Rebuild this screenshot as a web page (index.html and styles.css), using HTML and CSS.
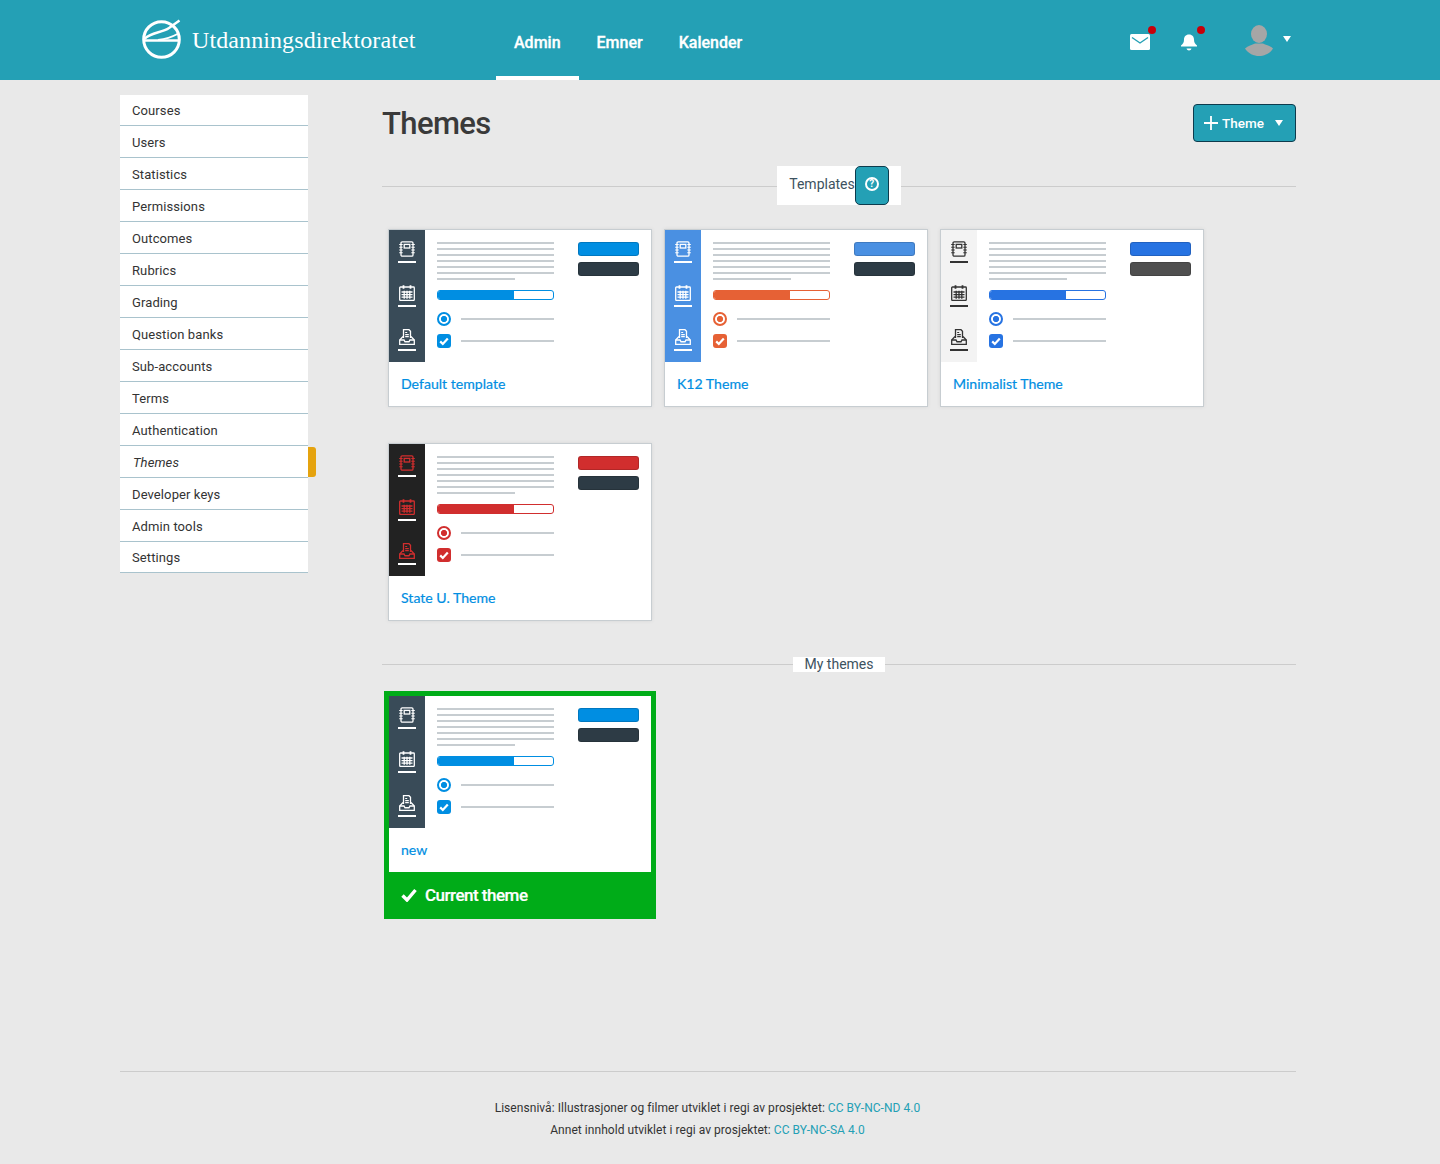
FILE: index.html
```html
<!DOCTYPE html>
<html lang="en">

<head>
    <meta charset="UTF-8" />
    <meta name="viewport" content="width=device-width, initial-scale=1.0" />
    <title>Themes</title>
    <link rel="stylesheet" href="styles.css">
</head>

<body>

    <svg class="icon-defs" aria-hidden="true">
        <symbol id="ico-notebook" viewBox="0 0 16 16">
            <g fill="none" stroke="currentColor" stroke-width="1.3">
                <rect x="2" y="0.8" width="12" height="14.4" rx="1.2" />
                <rect x="5.2" y="3.4" width="5.6" height="3.6" />
                <path d="M0.2 3.5h3.5M0.2 6.2h3.5M0.2 9h3.5M0.2 11.8h3.5M12.3 3.5h3.5M12.3 6.2h3.5M12.3 9h3.5M12.3 11.8h3.5" stroke-width="1.1" />
            </g>
        </symbol>
        <symbol id="ico-calendar" viewBox="0 0 16 16">
            <g fill="none" stroke="currentColor" stroke-width="1.3">
                <rect x="0.7" y="2" width="14.6" height="13.4" rx="0.8" />
                <path d="M4.5 0.2v3.6M11.5 0.2v3.6" stroke-width="1.8" />
                <path d="M2.5 7h11M2.5 9.6h11M2.5 12.2h11M5.2 5.8v8M8 5.8v8M10.8 5.8v8" />
            </g>
        </symbol>
        <symbol id="ico-tray" viewBox="0 0 16 16">
            <g fill="none" stroke="currentColor" stroke-width="1.3">
                <path d="M4.5 9V0.7h5.5l1.500 1.500V9" />
                <path d="M6.2 3.5h2M6.2 5.600h3.600M6.2 7.600h3.600" stroke-width="1.1" />
                <path d="M4 7.5L0.7 11v4.300h14.600V11L12 7.5" />
                <path d="M0.7 11h4.300l1 1.800h4l1-1.800h4.300" stroke-width="1.4" />
            </g>
        </symbol>
        <symbol id="ico-check" viewBox="0 0 14 14">
            <path d="M3.2 7.4l2.600 2.600 5-5.600" fill="none" stroke="currentColor" stroke-width="2.2" />
        </symbol>
    </svg>

    <header class="topbar">
        <a class="brand" href="#">
            <svg class="brand-logo" viewBox="0 0 42 42">
                <g fill="none" stroke="#fff">
                    <circle cx="20.5" cy="20.5" r="17.8" stroke-width="3" />
                    <path d="M3 21.5H38" stroke-width="2.4" />
                    <path d="M3.5 20C10 13 21 14 28 9L38.5 1.5" stroke-width="2.4" />
                    <path d="M17 21C25 20 31 18 36.5 15" stroke-width="1.8" />
                </g>
            </svg>
            <span class="brand-name">Utdanningsdirektoratet</span>
        </a>
        <nav class="mainnav">
            <a class="mainnav-link active" href="#">Admin</a>
            <a class="mainnav-link" href="#">Emner</a>
            <a class="mainnav-link" href="#">Kalender</a>
        </nav>
        <div class="usertools">
            <span class="tool tool-mail">
                <svg width="20" height="16" viewBox="0 0 20 16">
                    <rect width="20" height="16" rx="1.5" fill="#fff" />
                    <path d="M2 3.5l8 5.5 8-5.5" fill="none" stroke="#24a0b5" stroke-width="1.4" />
                </svg>
                <i class="dot"></i>
            </span>
            <span class="tool tool-bell">
                <svg width="18" height="17" viewBox="0 0 18 17">
                    <path d="M9 0.5c3.4 0 5 2.6 5 5.5 0 3 1 5 3 6.5v1H1v-1c2-1.5 3-3.5 3-6.5C4 3.1 5.6 0.5 9 0.5z" fill="#fff" transform="scale(1 0.92)" />
                    <path d="M6.5 14.5h5c-0.3 1.3-1.3 2-2.5 2s-2.2-0.7-2.500-2z" fill="#fff" />
                </svg>
                <i class="dot"></i>
            </span>
            <svg class="avatar" width="28" height="31" viewBox="0 0 28 31">
                <ellipse cx="14" cy="9" rx="8" ry="9" fill="#a6a6a6" />
                <path d="M0 23.5C3 20.5 7 20 10 18.5h8c3 1.5 7 2 10 5C25 28.5 19 31 14 31S3 28.5 0 23.5z" fill="#a6a6a6" />
            </svg>
            <i class="caret caret-user"></i>
        </div>
    </header>

    <div class="layout">
        <aside class="sidenav">
            <a class="sidenav-item first" href="#">Courses</a>
            <a class="sidenav-item" href="#">Users</a>
            <a class="sidenav-item" href="#">Statistics</a>
            <a class="sidenav-item" href="#">Permissions</a>
            <a class="sidenav-item" href="#">Outcomes</a>
            <a class="sidenav-item" href="#">Rubrics</a>
            <a class="sidenav-item" href="#">Grading</a>
            <a class="sidenav-item" href="#">Question banks</a>
            <a class="sidenav-item" href="#">Sub-accounts</a>
            <a class="sidenav-item" href="#">Terms</a>
            <a class="sidenav-item" href="#">Authentication</a>
            <a class="sidenav-item active" href="#">Themes</a>
            <a class="sidenav-item" href="#">Developer keys</a>
            <a class="sidenav-item" href="#">Admin tools</a>
            <a class="sidenav-item last" href="#">Settings</a>
        </aside>

        <main class="content">
            <div class="content-head">
                <h1>Themes</h1>
                <button class="add-btn">
                    <svg width="14" height="14" viewBox="0 0 14 14">
                        <path d="M7 0v14M0 7h14" stroke="#fff" stroke-width="1.8" />
                    </svg>
                    <span>Theme</span>
                    <i class="caret"></i>
                </button>
            </div>

            <div class="divider divider-templates">
                <div class="divider-label">
                    <span>Templates</span>
                    <button class="help-btn"><span class="help-mark">?</span></button>
                </div>
            </div>

            <section class="card-grid">
                <article class="card theme-default">
                    <div class="preview">
                        <div class="mini-nav">
                            <div class="mini-nav-item"><svg><use href="#ico-notebook" /></svg></div>
                            <div class="mini-nav-item"><svg><use href="#ico-calendar" /></svg></div>
                            <div class="mini-nav-item"><svg><use href="#ico-tray" /></svg></div>
                        </div>
                        <div class="mini-main">
                            <div class="mini-text"><i></i><i></i><i></i><i></i><i></i><i></i><i></i></div>
                            <div class="mini-bar"><b></b></div>
                            <div class="mini-row"><span class="mini-radio"></span><i></i></div>
                            <div class="mini-row"><span class="mini-check"><svg><use href="#ico-check" /></svg></span><i></i></div>
                        </div>
                        <div class="mini-btns"><span class="mini-btn-a"></span><span class="mini-btn-b"></span></div>
                    </div>
                    <a class="card-name" href="#">Default template</a>
                </article>

                <article class="card theme-k12">
                    <div class="preview">
                        <div class="mini-nav">
                            <div class="mini-nav-item"><svg><use href="#ico-notebook" /></svg></div>
                            <div class="mini-nav-item"><svg><use href="#ico-calendar" /></svg></div>
                            <div class="mini-nav-item"><svg><use href="#ico-tray" /></svg></div>
                        </div>
                        <div class="mini-main">
                            <div class="mini-text"><i></i><i></i><i></i><i></i><i></i><i></i><i></i></div>
                            <div class="mini-bar"><b></b></div>
                            <div class="mini-row"><span class="mini-radio"></span><i></i></div>
                            <div class="mini-row"><span class="mini-check"><svg><use href="#ico-check" /></svg></span><i></i></div>
                        </div>
                        <div class="mini-btns"><span class="mini-btn-a"></span><span class="mini-btn-b"></span></div>
                    </div>
                    <a class="card-name" href="#">K12 Theme</a>
                </article>

                <article class="card theme-minimal">
                    <div class="preview">
                        <div class="mini-nav">
                            <div class="mini-nav-item"><svg><use href="#ico-notebook" /></svg></div>
                            <div class="mini-nav-item"><svg><use href="#ico-calendar" /></svg></div>
                            <div class="mini-nav-item"><svg><use href="#ico-tray" /></svg></div>
                        </div>
                        <div class="mini-main">
                            <div class="mini-text"><i></i><i></i><i></i><i></i><i></i><i></i><i></i></div>
                            <div class="mini-bar"><b></b></div>
                            <div class="mini-row"><span class="mini-radio"></span><i></i></div>
                            <div class="mini-row"><span class="mini-check"><svg><use href="#ico-check" /></svg></span><i></i></div>
                        </div>
                        <div class="mini-btns"><span class="mini-btn-a"></span><span class="mini-btn-b"></span></div>
                    </div>
                    <a class="card-name" href="#">Minimalist Theme</a>
                </article>

                <article class="card theme-state">
                    <div class="preview">
                        <div class="mini-nav">
                            <div class="mini-nav-item"><svg><use href="#ico-notebook" /></svg></div>
                            <div class="mini-nav-item"><svg><use href="#ico-calendar" /></svg></div>
                            <div class="mini-nav-item"><svg><use href="#ico-tray" /></svg></div>
                        </div>
                        <div class="mini-main">
                            <div class="mini-text"><i></i><i></i><i></i><i></i><i></i><i></i><i></i></div>
                            <div class="mini-bar"><b></b></div>
                            <div class="mini-row"><span class="mini-radio"></span><i></i></div>
                            <div class="mini-row"><span class="mini-check"><svg><use href="#ico-check" /></svg></span><i></i></div>
                        </div>
                        <div class="mini-btns"><span class="mini-btn-a"></span><span class="mini-btn-b"></span></div>
                    </div>
                    <a class="card-name" href="#">State U. Theme</a>
                </article>
            </section>

            <div class="divider divider-mine">
                <div class="divider-label">
                    <span>My themes</span>
                </div>
            </div>

            <section class="card-grid card-grid-mine">
                <article class="card card-current theme-default">
                    <div class="preview">
                        <div class="mini-nav">
                            <div class="mini-nav-item"><svg><use href="#ico-notebook" /></svg></div>
                            <div class="mini-nav-item"><svg><use href="#ico-calendar" /></svg></div>
                            <div class="mini-nav-item"><svg><use href="#ico-tray" /></svg></div>
                        </div>
                        <div class="mini-main">
                            <div class="mini-text"><i></i><i></i><i></i><i></i><i></i><i></i><i></i></div>
                            <div class="mini-bar"><b></b></div>
                            <div class="mini-row"><span class="mini-radio"></span><i></i></div>
                            <div class="mini-row"><span class="mini-check"><svg><use href="#ico-check" /></svg></span><i></i></div>
                        </div>
                        <div class="mini-btns"><span class="mini-btn-a"></span><span class="mini-btn-b"></span></div>
                    </div>
                    <a class="card-name" href="#">new</a>
                    <div class="current-label">
                        <svg width="16" height="14" viewBox="0 0 16 14">
                            <path d="M1.5 7.5l4.5 4.5L14.5 2" fill="none" stroke="#fff" stroke-width="3.4" />
                        </svg>
                        <span>Current theme</span>
                    </div>
                </article>
            </section>
        </main>
    </div>

    <footer class="pagefoot">
        <p>Lisensnivå: Illustrasjoner og filmer utviklet i regi av prosjektet: <a href="#">CC BY-NC-ND 4.0</a></p>
        <p>Annet innhold utviklet i regi av prosjektet: <a href="#">CC BY-NC-SA 4.0</a></p>
    </footer>

</body>

</html>
```

FILE: styles.css
```css
* {
    box-sizing: border-box;
    margin: 0;
    padding: 0;
}

body {
    background: #e9e9e9;
    color: #333;
    font-family: Roboto, sans-serif;
}

a {
    text-decoration: none;
}

.icon-defs {
    display: none;
}

/* top bar */
.topbar {
    display: flex;
    align-items: stretch;
    height: 80px;
    padding-left: 141px;
    background: #24a0b5;
}

.brand {
    display: flex;
    align-items: center;
    width: 355px;
    color: #fff;
}

.brand-logo {
    width: 42px;
    height: 42px;
}

.brand-name {
    margin-left: 9px;
    font-family: "Liberation Serif", serif;
    font-size: 24px;
    letter-spacing: 0.1px;
}

.mainnav {
    display: flex;
}

.mainnav-link {
    display: flex;
    align-items: center;
    padding: 8px 18px 0;
    border-bottom: 4px solid transparent;
    color: #fff;
    font-size: 16px;
    font-weight: 500;
    -webkit-text-stroke: 0.3px #fff;
}

.mainnav-link.active {
    border-bottom-color: #fff;
}

.usertools {
    display: flex;
    align-items: flex-start;
    margin-left: 370px;
    padding-top: 34px;
}

.tool {
    position: relative;
    display: block;
    line-height: 0;
}

.tool-bell {
    margin-left: 30px;
}

.dot {
    position: absolute;
    top: -8px;
    right: -6px;
    width: 8px;
    height: 8px;
    border-radius: 50%;
    background: #c8000a;
}

.tool-bell .dot {
    right: -7px;
}

.avatar {
    margin: -9px 0 0 47px;
}

.caret {
    width: 0;
    height: 0;
    border-left: 4px solid transparent;
    border-right: 4px solid transparent;
    border-top: 6px solid #fff;
}

.caret-user {
    margin: 2px 0 0 10px;
}

/* page layout */
.layout {
    display: flex;
    align-items: flex-start;
    padding-left: 120px;
}

.sidenav {
    display: flex;
    flex-direction: column;
    width: 188px;
    margin-top: 15px;
    background: #fff;
}

.sidenav-item {
    position: relative;
    display: flex;
    align-items: center;
    height: 32px;
    padding: 2px 0 0 12px;
    border-bottom: 1px solid #a9c3cd;
    color: #333;
    font-size: 13px;
    letter-spacing: 0.1px;
}

.sidenav-item.first,
.sidenav-item.last {
    height: 31px;
    padding-top: 0;
}

.sidenav-item.active {
    font-style: italic;
    padding-left: 13px;
}

.sidenav-item.active::after {
    content: "";
    position: absolute;
    top: 1px;
    left: 188px;
    width: 8px;
    height: 30px;
    border-radius: 0 3px 3px 0;
    background: #e5a30f;
}

.content {
    width: 914px;
    margin-left: 74px;
}

.content-head {
    display: flex;
    justify-content: space-between;
    align-items: flex-start;
    height: 86px;
    padding-top: 24px;
}

.content-head h1 {
    font-size: 31px;
    font-weight: 500;
    line-height: 40px;
    letter-spacing: -0.6px;
    color: #3a3a3a;
}

.add-btn {
    display: flex;
    align-items: center;
    width: 103px;
    height: 38px;
    padding-left: 10px;
    border: 1px solid #0d3b4d;
    border-radius: 4px;
    background: #24a0b5;
    color: #fff;
    font-family: Roboto, sans-serif;
    font-size: 13.5px;
    font-weight: 500;
}

.add-btn span {
    margin-left: 4px;
}

.add-btn .caret {
    margin-left: 11px;
}

/* section dividers */
.divider {
    display: flex;
    justify-content: center;
    background: linear-gradient(#ccc, #ccc) 0 0 / 100% 1px no-repeat;
}

.divider-label {
    display: flex;
    align-items: center;
    background: #fff;
    color: #3d5260;
    font-size: 14px;
    padding: 0 12px;
}

.divider-templates {
    background-position: 0 20px;
}

.divider-templates .divider-label {
    height: 39px;
    padding-bottom: 3px;
}

.divider-mine {
    margin-top: 36px;
    background-position: 0 7px;
}

.divider-mine .divider-label {
    height: 15px;
    padding-bottom: 2px;
}

.help-btn {
    display: flex;
    justify-content: center;
    align-items: flex-start;
    width: 34px;
    height: 39px;
    margin-bottom: -3px;
    padding-top: 10px;
    border: 1px solid #0d3b4d;
    border-radius: 5px;
    background: #24a0b5;
}

.help-mark {
    display: block;
    width: 14px;
    height: 14px;
    border: 2px solid #fff;
    border-radius: 50%;
    color: #fff;
    font-family: Roboto, sans-serif;
    font-size: 10px;
    font-weight: 700;
    line-height: 10px;
    text-align: center;
}

/* theme cards */
.card-grid {
    display: flex;
    flex-wrap: wrap;
    gap: 36px 12px;
    margin: 24px 0 0 6px;
}

.card-grid-mine {
    margin: 19px 0 0 2px;
}

.card {
    --nav-bg: #394b58;
    --nav-icon: #fff;
    --nav-rule: #fff;
    --accent: #008ee2;
    --btn-a: #008ee2;
    --btn-b: #2d3b45;
    width: 264px;
    height: 178px;
    border: 1px solid #c7cdd1;
    background: #fff;
    box-shadow: 0 0 4px rgba(0, 0, 0, 0.08);
}

.theme-k12 {
    --nav-bg: #4a90e2;
    --accent: #e66135;
    --btn-a: #4a90e2;
}

.theme-minimal {
    --nav-bg: #f3f3f3;
    --nav-icon: #333;
    --nav-rule: #333;
    --accent: #2773e2;
    --btn-a: #2773e2;
    --btn-b: #4f4f4f;
}

.theme-state {
    --nav-bg: #222;
    --nav-icon: #d12e2e;
    --accent: #d12e2e;
    --btn-a: #d12e2e;
}

.preview {
    display: flex;
    height: 132px;
}

.mini-nav {
    width: 36px;
    padding-top: 11px;
    background: var(--nav-bg);
}

.mini-nav-item {
    width: 18px;
    height: 22px;
    margin: 0 auto 22px;
    border-bottom: 2px solid var(--nav-rule);
    color: var(--nav-icon);
    text-align: center;
}

.mini-nav-item svg {
    display: block;
    width: 16px;
    height: 16px;
    margin: 0 auto;
}

.mini-main {
    width: 117px;
    margin-left: 12px;
    padding-top: 12px;
}

.mini-text i {
    display: block;
    height: 2px;
    margin-bottom: 4px;
    background: #c7cdd1;
}

.mini-text i:last-child {
    width: 78px;
    margin-bottom: 0;
}

.mini-bar {
    height: 10px;
    margin-top: 10px;
    border: 1px solid var(--accent);
    border-radius: 3px;
    overflow: hidden;
}

.mini-bar b {
    display: block;
    width: 66%;
    height: 100%;
    background: var(--accent);
}

.mini-row {
    display: flex;
    align-items: center;
    height: 14px;
    margin-top: 8px;
}

.mini-bar + .mini-row {
    margin-top: 12px;
}

.mini-row i {
    flex: 1;
    height: 2px;
    margin-left: 10px;
    background: #c7cdd1;
}

.mini-radio {
    width: 14px;
    height: 14px;
    border: 2.5px solid var(--accent);
    border-radius: 50%;
    background: radial-gradient(circle, var(--accent) 2.8px, #fff 3.3px);
}

.mini-check {
    width: 14px;
    height: 14px;
    border-radius: 3px;
    background: var(--accent);
    color: #fff;
}

.mini-check svg {
    display: block;
    width: 14px;
    height: 14px;
}

.mini-btns {
    width: 61px;
    margin-left: 24px;
    padding-top: 12px;
}

.mini-btns span {
    display: block;
    height: 14px;
    margin-bottom: 6px;
    border: 1px solid rgba(0, 0, 0, 0.15);
    border-radius: 3px;
}

.mini-btn-a {
    background: var(--btn-a);
}

.mini-btn-b {
    background: var(--btn-b);
}

.card-name {
    display: block;
    height: 44px;
    padding-left: 12px;
    color: #008ee2;
    font-family: Lato, sans-serif;
    font-size: 14.1px;
    line-height: 44px;
    -webkit-text-stroke: 0.2px #008ee2;
}

.card-current {
    width: 272px;
    height: 228px;
    border: 5px solid #00ac18;
    border-bottom: 0;
    box-shadow: none;
}

.current-label {
    display: flex;
    align-items: center;
    gap: 8px;
    height: 47px;
    margin: 0 -5px;
    padding: 0 0 1px 17px;
    background: #00ac18;
    color: #fff;
    font-size: 17px;
    font-weight: 500;
    letter-spacing: -0.5px;
    -webkit-text-stroke: 0.2px #fff;
}

/* footer */
.pagefoot {
    margin: 152px 144px 0 120px;
    padding: 25px 1px 23px 0;
    border-top: 1px solid #ccc;
    color: #333;
    font-size: 12px;
    letter-spacing: 0.05px;
    line-height: 22px;
    text-align: center;
}

.pagefoot a {
    color: #24a0b5;
}
```
